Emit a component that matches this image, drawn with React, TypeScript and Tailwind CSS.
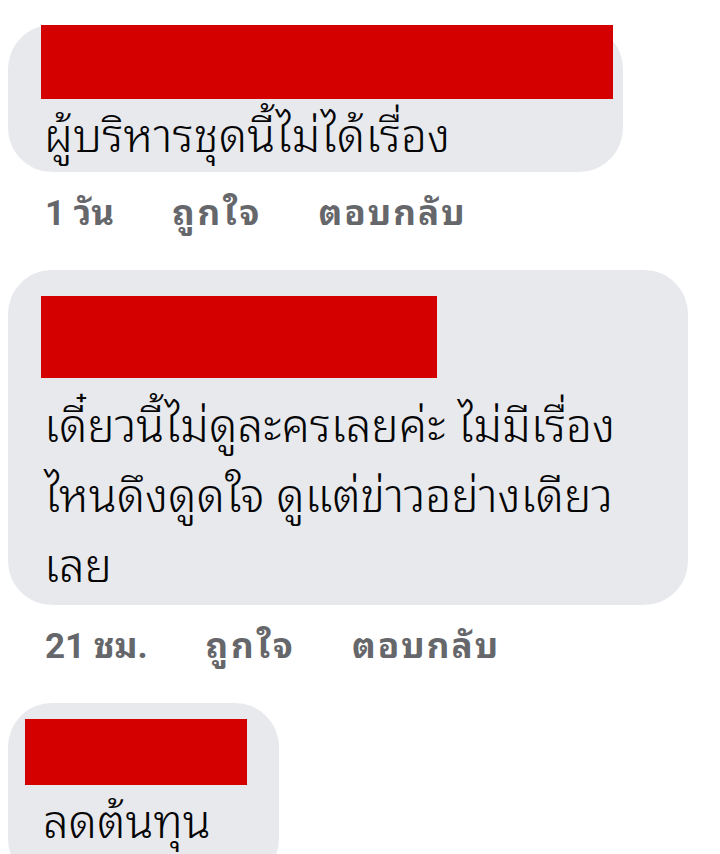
import React from "react";

const Meta = ({ time }: { time: string }) => (
  <div className="flex h-[98px] items-center pb-[16px] pl-[45px] font-[Roboto,'Noto_Sans_Thai_Looped',sans-serif] text-[35px] font-bold leading-none text-[#65676b]">
    <span className="mr-[58px]">{time}</span>
    <span className="mr-[56px] tracking-[3px]">ถูกใจ</span>
    <span className="tracking-[2px]">ตอบกลับ</span>
  </div>
);

export default function App() {
  return (
    <div className="h-[854px] w-[720px] overflow-hidden bg-white font-['Noto_Sans_Thai_Looped','Noto_Sans',sans-serif] text-[#050505]">
      {/* comment 1 */}
      <div className="pl-[8px] pt-[28px]">
        <div className="h-[147px] w-[615px] rounded-[44px] bg-[#e8e9ed] pl-[33px]">
          <div className="-mt-[3px] h-[74px] w-[572px] bg-[#d40000]" />
          <p className="pl-[3px] text-[46px] font-light leading-[64px] tracking-[0.2px]">ผู้บริหารชุดนี้ไม่ได้เรื่อง</p>
        </div>
      </div>
      <Meta time="1 วัน" />

      {/* comment 2 */}
      <div className="pl-[8px]">
        <div className="h-[335px] w-[680px] rounded-[44px] bg-[#e8e9ed] pl-[33px] pt-[26px]">
          <div className="h-[82px] w-[396px] bg-[#d40000]" />
          <p className="pl-[3px] pt-[8px] text-[46px] font-light leading-[70px]">
            เดี๋ยวนี้ไม่ดูละครเลยค่ะ ไม่มีเรื่อง
            <br />
            ไหนดึงดูดใจ ดูแต่ข่าวอย่างเดียว
            <br />
            เลย
          </p>
        </div>
      </div>
      <Meta time="21 ชม." />

      {/* comment 3 */}
      <div className="pl-[8px]">
        <div className="h-[180px] w-[271px] rounded-[44px] bg-[#e8e9ed] pl-[17px] pt-[16px]">
          <div className="h-[66px] w-[222px] bg-[#d40000]" />
          <p className="pl-[18px] text-[46px] font-light leading-[64px]">ลดต้นทุน</p>
        </div>
      </div>
    </div>
  );
}
